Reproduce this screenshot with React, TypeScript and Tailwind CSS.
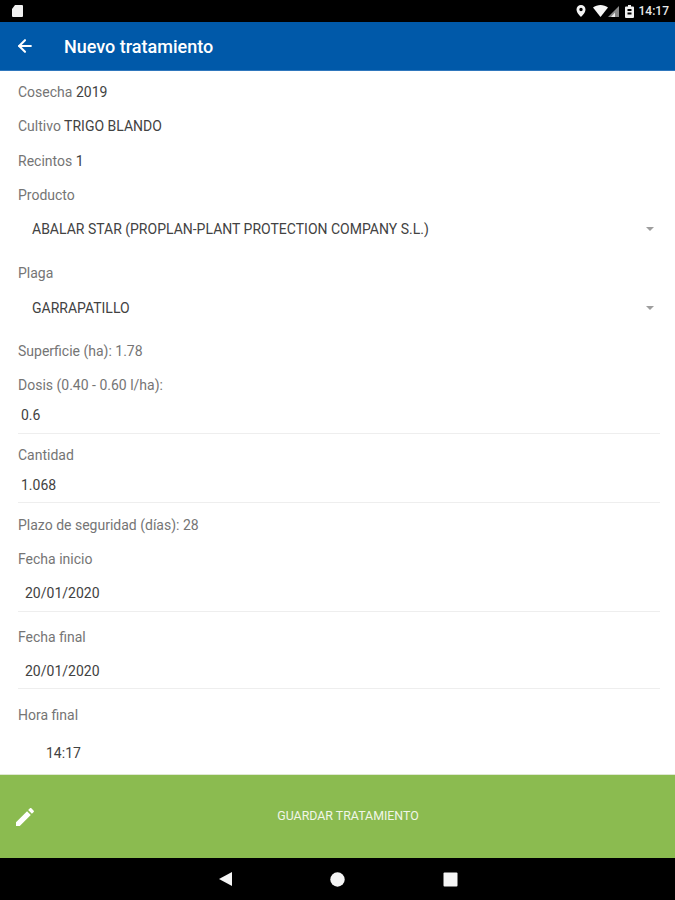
import { ArrowLeft } from 'lucide-react'

function StatusBar() {
  return (
    <div className="h-[22px] bg-black flex items-center justify-between pl-[11px] pr-[6px] shrink-0">
      <svg width="13" height="14" viewBox="0 0 13 14">
        <path d="M4 1h7a1 1 0 0 1 1 1v10a1 1 0 0 1-1 1H2a1 1 0 0 1-1-1V5z" fill="#f1f1f1" />
      </svg>
      <div className="flex items-center text-[12px] font-medium text-[#e8e8e8]">
        <svg width="12" height="14" viewBox="0 0 12 14" className="mr-[6px]">
          <path fillRule="evenodd" d="M6 1a4.5 4.5 0 0 0-4.500 4.500C1.500 9 6 13 6 13s4.500-4 4.500-7.500A4.500 4.500 0 0 0 6 1zm0 6.200a1.700 1.700 0 1 1 0-3.400 1.700 1.700 0 0 1 0 3.400z" fill="#f4f4f4" />
        </svg>
        <svg width="15" height="12" viewBox="0 0 15 12">
          <path d="M0 2.500C2 1 4.800 0 7.500 0S13 1 15 2.500L7.500 12z" fill="#f6f6f6" />
        </svg>
        <svg width="11" height="12" viewBox="0 0 11 12" className="mr-[6px]">
          <path d="M0 12 11 1v11z" fill="#8a8a8a" />
          <path d="M3 12 7 7.500V12z" fill="#eeeeee" />
        </svg>
        <svg width="9" height="13" viewBox="0 0 9 13" className="mr-[5px]">
          <path fillRule="evenodd" d="M3 0h3v1.500h2a1 1 0 0 1 1 1V12a1 1 0 0 1-1 1H1a1 1 0 0 1-1-1V2.500a1 1 0 0 1 1-1h2zM2.500 4v2h4V4zm0 3.500v2h4v-2z" fill="#f0f0f0" />
        </svg>
        <span>14:17</span>
      </div>
    </div>
  )
}

function PlainRow({ label, value, className }: { label: string; value?: string; className: string }) {
  return (
    <div className={`pl-[18px] text-[14px] leading-[18px] ${className}`}>
      <span className="text-[#757575]">{label}</span>
      {value && <span className="text-[#424242]"> {value}</span>}
    </div>
  )
}

function SelectRow({ value, className }: { value: string; className: string }) {
  return (
    <div className={`flex items-center justify-between pl-[32px] pr-[21px] ${className}`}>
      <span className="text-[14px] leading-[18px] text-[#424242]">{value}</span>
      <span className="w-0 h-0 border-x-[4px] border-x-transparent border-t-[4px] border-t-[#9e9e9e]" />
    </div>
  )
}

function InputRow({ value, indent, className }: { value: string; indent: string; className: string }) {
  return (
    <div className={`ml-[18px] mr-[15px] border-b border-[#eeeeee] text-[14px] leading-[18px] text-[#424242] ${className}`}>
      <div className={indent}>{value}</div>
    </div>
  )
}

export default function App() {
  return (
    <div className="w-[675px] h-[900px] flex flex-col overflow-hidden bg-white font-['Roboto',sans-serif]">
      <StatusBar />

      <div className="h-[49px] bg-[#0059a9] flex items-center pl-[15px] shrink-0 border-b border-[#2f77bd]">
        <ArrowLeft size={20} strokeWidth={2.5} className="text-white" />
        <span className="ml-[29px] text-[18px] font-medium text-white">Nuevo tratamiento</span>
      </div>

      <div className="flex-1 min-h-0 overflow-hidden">
        <PlainRow label="Cosecha" value="2019" className="mt-[12px]" />
        <PlainRow label="Cultivo" value="TRIGO BLANDO" className="mt-[16px]" />
        <PlainRow label="Recintos" value="1" className="mt-[17px]" />
        <PlainRow label="Producto" className="mt-[16px]" />
        <SelectRow value="ABALAR STAR (PROPLAN-PLANT PROTECTION COMPANY S.L.)" className="mt-[16px]" />
        <PlainRow label="Plaga" className="mt-[26px]" />
        <SelectRow value="GARRAPATILLO" className="mt-[17px]" />
        <PlainRow label="Superficie (ha): 1.78" className="mt-[25px]" />
        <PlainRow label="Dosis (0.40 - 0.60 l/ha):" className="mt-[16px]" />
        <InputRow value="0.6" indent="pl-[3px] pb-[9px]" className="mt-[12px]" />
        <PlainRow label="Cantidad" className="mt-[12px]" />
        <InputRow value="1.068" indent="pl-[3px] pb-[8px]" className="mt-[12px]" />
        <PlainRow label="Plazo de seguridad (días): 28" className="mt-[13px]" />
        <PlainRow label="Fecha inicio" className="mt-[16px]" />
        <InputRow value="20/01/2020" indent="pl-[7px] pb-[9px]" className="mt-[16px]" />
        <PlainRow label="Fecha final" className="mt-[16px]" />
        <InputRow value="20/01/2020" indent="pl-[7px] pb-[8px]" className="mt-[16px]" />
        <PlainRow label="Hora final" className="mt-[17px]" />
        <div className="mt-[20px] pl-[46px] text-[14px] leading-[18px] text-[#424242]">14:17</div>
      </div>

      <div className="h-[84px] bg-[#8bbb50] flex items-center pl-[13px] shrink-0 border-t border-[#dfe8d2]">
        <svg width="24" height="24" viewBox="0 0 24 24" fill="#ffffff">
          <path d="M3 17.250V21h3.750L17.810 9.940l-3.750-3.750L3 17.250zM20.710 7.040c.39-.39.39-1.020 0-1.410l-2.340-2.340c-.39-.39-1.020-.39-1.410 0l-1.830 1.830 3.750 3.750 1.830-1.830z" />
        </svg>
        <span className="flex-1 text-center text-[12.4px] text-[#f1f6e8] pr-[16px]">GUARDAR TRATAMIENTO</span>
      </div>

      <div className="h-[42px] bg-black flex items-center justify-center shrink-0">
        <div className="flex items-center gap-[98px] pl-[1px]">
          <svg width="14" height="16" viewBox="0 0 14 16"><path d="M14 1v14L1 8z" fill="#f5f5f5" /></svg>
          <svg width="15" height="15" viewBox="0 0 15 15"><circle cx="7.500" cy="7.500" r="7.200" fill="#f5f5f5" /></svg>
          <svg width="15" height="15" viewBox="0 0 15 15"><rect x="0.500" y="0.500" width="14" height="14" rx="1" fill="#f5f5f5" /></svg>
        </div>
      </div>
    </div>
  )
}
